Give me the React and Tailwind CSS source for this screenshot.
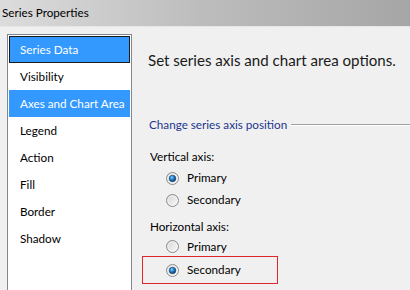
import React from "react";

function Radio({ checked }) {
  return (
    <svg width="13" height="13" viewBox="0 0 13 13" className="shrink-0">
      <defs>
        <linearGradient id="rbg" x1="0" y1="0" x2="1" y2="1">
          <stop offset="0" stopColor="#d4d4d4" />
          <stop offset="1" stopColor="#fbfbfb" />
        </linearGradient>
        <radialGradient id="rdot" cx="0.4" cy="0.35" r="0.7">
          <stop offset="0" stopColor="#8fd3ff" />
          <stop offset="0.45" stopColor="#1f7fc8" />
          <stop offset="1" stopColor="#0b2f5e" />
        </radialGradient>
      </defs>
      <circle cx="6.5" cy="6.5" r="6" fill="url(#rbg)" stroke="#8a8a8a" strokeWidth="1" />
      <circle cx="6.5" cy="6.5" r="4.6" fill="none" stroke="#f4f4f4" strokeWidth="0.8" />
      {checked && <circle cx="6.5" cy="6.5" r="3.3" fill="url(#rdot)" stroke="#1a3f6a" strokeWidth="0.6" />}
    </svg>
  );
}

const items = [
  { label: "Series Data", state: "focus" },
  { label: "Visibility" },
  { label: "Axes and Chart Area", state: "sel" },
  { label: "Legend" },
  { label: "Action" },
  { label: "Fill" },
  { label: "Border" },
  { label: "Shadow" },
];

export default function App() {
  const font = { fontFamily: 'Lato, "Noto Sans", sans-serif' };
  return (
    <div className="w-[410px] h-[290px] overflow-hidden bg-[#f0f0f0] text-[11.7px] text-black" style={font}>
      <div className="h-[26px] bg-gradient-to-r from-[#dcdcdc] via-[#bcbcbc] to-[#a6a6a6] flex items-center pl-[2px] leading-none">
        Series Properties
      </div>
      <div className="h-px bg-[#e6e6e6]" />
      <div className="flex">
        <div className="ml-[7px] mt-[7px] w-[125px] shrink-0 h-[300px] border border-[#828790] bg-white p-px">
          {items.map((it) => (
            <div
              key={it.label}
              className={
                "h-[27px] flex items-center pl-[10px] pt-px whitespace-nowrap " +
                (it.state === "focus"
                  ? "bg-[#3399ff] text-white border border-[#1a1a1a]"
                  : it.state === "sel"
                  ? "bg-[#3399ff] text-white border border-[#3399ff]"
                  : "border border-transparent")
              }
            >
              {it.label}
            </div>
          ))}
        </div>
        <div className="flex-1 flex flex-col">
          <div className="mt-[23px] ml-[16px] text-[15.1px] leading-[20px] text-[#1a1a1a] whitespace-nowrap">
            Set series axis and chart area options.
          </div>
          <div className="mt-[47px] ml-[17px] flex items-center gap-[4px] h-[16px]">
            <span className="text-[#22368f] whitespace-nowrap">Change series axis position</span>
            <div className="flex-1 flex flex-col">
              <div className="h-px bg-[#a0a0a0]" />
              <div className="h-px bg-white" />
            </div>
          </div>
          <div className="mt-[15px] ml-[18px] h-[16px] leading-[16px]">Vertical axis:</div>
          <div className="mt-[3px] ml-[34px] h-[22px] flex items-center gap-[8px]">
            <Radio checked />
            <span>Primary</span>
          </div>
          <div className="ml-[34px] h-[22px] flex items-center gap-[8px]">
            <Radio />
            <span>Secondary</span>
          </div>
          <div className="mt-[7px] ml-[18px] h-[16px] leading-[16px]">Horizontal axis:</div>
          <div className="mt-[3px] ml-[34px] h-[19px] flex items-center gap-[8px]">
            <Radio />
            <span>Primary</span>
          </div>
          <div className="ml-[10px] w-[136px] h-[28px] border border-[#e0262b] flex items-center gap-[8px] pl-[23px]">
            <Radio checked />
            <span>Secondary</span>
          </div>
        </div>
      </div>
    </div>
  );
}
